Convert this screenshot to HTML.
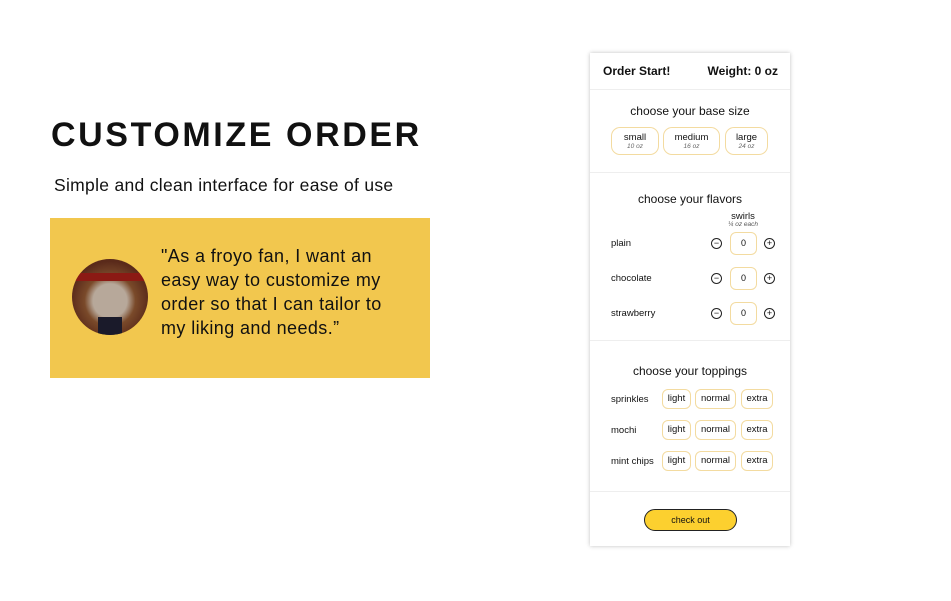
<!DOCTYPE html>
<html><head><style>
body{margin:0;width:951px;height:601px;background:#fff;font-family:"Liberation Sans","DejaVu Sans",sans-serif;position:relative;overflow:hidden;color:#111}
.a{position:absolute}
.c{text-align:center}
.card{position:absolute;left:590px;top:53px;width:200px;height:493px;background:#fff;box-shadow:0 0 4px rgba(0,0,0,.25)}
.hr{position:absolute;left:0;width:200px;height:1px;background:#eee}
.pill{position:absolute;border:1px solid #f3dba0;border-radius:9px;text-align:center;box-sizing:border-box}
.t{position:absolute;border:1px solid #f3dba0;border-radius:6px;height:20px;line-height:18px;font-size:9.5px;text-align:center;box-sizing:border-box}
.circ{position:absolute;width:9px;height:9px;border:1px solid #222;border-radius:50%;font-size:9px;line-height:9px;text-align:center}
.lbl{position:absolute;left:21px;font-size:9.5px}
</style></head><body>
<div class="a" style="left:51px;top:116px;font-size:34px;font-weight:bold;letter-spacing:2.6px">CUSTOMIZE ORDER</div>
<div class="a" style="left:54px;top:175px;font-size:17.5px;letter-spacing:0.3px;white-space:nowrap">Simple and clean interface for ease of use</div>
<div class="a" style="left:50px;top:218px;width:380px;height:160px;background:#f2c74e"></div>
<div class="a" style="left:72px;top:259px;width:76px;height:76px;border-radius:50%;background:radial-gradient(circle at 50% 55%,#b7a89a 0 30%,#7a4a2a 45%,#5a2a1a 70%);overflow:hidden">
<div style="position:absolute;left:0;top:14px;width:76px;height:8px;background:#8b1a14"></div>
<div style="position:absolute;left:26px;top:58px;width:24px;height:18px;background:#1a1a2a"></div></div>
<div class="a" style="left:161px;top:244px;font-size:18px;letter-spacing:0.4px;line-height:24px;white-space:nowrap">"As a froyo fan, I want an<br>easy way to customize my<br>order so that I can tailor to<br>my liking and needs.”</div>

<div class="card">
<div class="a" style="left:13px;top:11px;font-size:12px;font-weight:bold">Order Start!</div>
<div class="a" style="right:12px;top:11px;font-size:12px;font-weight:bold">Weight: 0 oz</div>
<div class="hr" style="top:36px"></div>
<div class="a c" style="left:0;width:200px;top:51px;font-size:12px">choose your base size</div>
<div class="pill" style="left:21px;top:74px;width:48px;height:28px"><div style="font-size:9.5px;margin-top:4px">small</div><div style="font-size:6.5px;font-style:italic;color:#666">10 oz</div></div>
<div class="pill" style="left:73px;top:74px;width:57px;height:28px"><div style="font-size:9.5px;margin-top:4px">medium</div><div style="font-size:6.5px;font-style:italic;color:#666">16 oz</div></div>
<div class="pill" style="left:135px;top:74px;width:43px;height:28px"><div style="font-size:9.5px;margin-top:4px">large</div><div style="font-size:6.5px;font-style:italic;color:#666">24 oz</div></div>
<div class="hr" style="top:119px"></div>
<div class="a c" style="left:0;width:200px;top:139px;font-size:12px">choose your flavors</div>
<div class="a c" style="left:133px;width:40px;top:158px;font-size:9.5px">swirls</div>
<div class="a c" style="left:128px;width:50px;top:168px;font-size:6.5px;font-style:italic;color:#555">¼ oz each</div>

<div class="lbl" style="top:185px">plain</div>
<div class="circ" style="left:121px;top:185px">−</div><div class="t" style="left:140px;top:179px;width:27px;height:23px;line-height:21px;font-size:9px">0</div><div class="circ" style="left:174px;top:185px">+</div>
<div class="lbl" style="top:220px">chocolate</div>
<div class="circ" style="left:121px;top:220px">−</div><div class="t" style="left:140px;top:214px;width:27px;height:23px;line-height:21px;font-size:9px">0</div><div class="circ" style="left:174px;top:220px">+</div>
<div class="lbl" style="top:255px">strawberry</div>
<div class="circ" style="left:121px;top:255px">−</div><div class="t" style="left:140px;top:249px;width:27px;height:23px;line-height:21px;font-size:9px">0</div><div class="circ" style="left:174px;top:255px">+</div>

<div class="hr" style="top:287px"></div>
<div class="a c" style="left:0;width:200px;top:311px;font-size:12px">choose your toppings</div>
<div class="lbl" style="top:341px">sprinkles</div>
<div class="t" style="left:72px;top:336px;width:29px">light</div><div class="t" style="left:105px;top:336px;width:41px">normal</div><div class="t" style="left:151px;top:336px;width:32px">extra</div>
<div class="lbl" style="top:372px">mochi</div>
<div class="t" style="left:72px;top:367px;width:29px">light</div><div class="t" style="left:105px;top:367px;width:41px">normal</div><div class="t" style="left:151px;top:367px;width:32px">extra</div>
<div class="lbl" style="top:403px">mint chips</div>
<div class="t" style="left:72px;top:398px;width:29px">light</div><div class="t" style="left:105px;top:398px;width:41px">normal</div><div class="t" style="left:151px;top:398px;width:32px">extra</div>
<div class="hr" style="top:438px"></div>
<div class="a c" style="left:54px;top:456px;width:91px;height:20px;line-height:20px;background:#fcd02f;border:1px solid #222;border-radius:11px;font-size:9px">check out</div>
</div>
</body></html>
